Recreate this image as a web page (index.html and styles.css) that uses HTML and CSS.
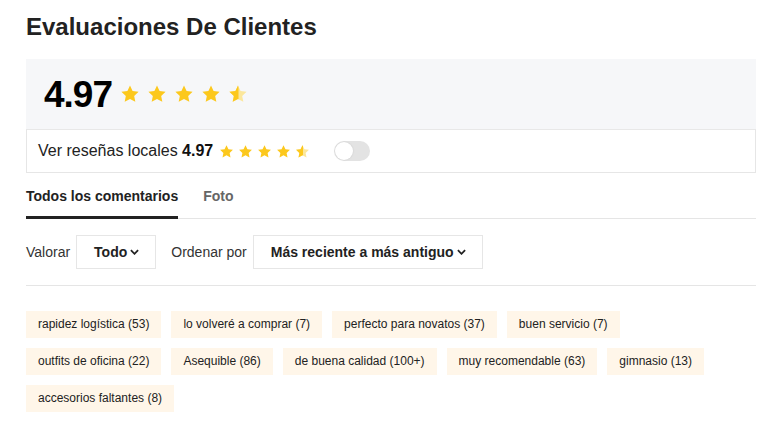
FILE: index.html
```html
<!DOCTYPE html>
<html lang="es">
<head>
<meta charset="utf-8">
<link rel="stylesheet" href="styles.css">
</head>
<body>
<svg width="0" height="0" class="defs">
  <defs>
    <symbol id="star" viewBox="0 0 24 24"><path d="M12 1.8l3.1 6.6 7.2.9-5.3 5 1.4 7.1L12 17.9l-6.4 3.5 1.4-7.1-5.3-5 7.2-.9z"/></symbol>
    <clipPath id="half"><rect x="0" y="0" width="12.6" height="24"/></clipPath>
  </defs>
</svg>
<main class="page">
  <h1 class="title">Evaluaciones De Clientes</h1>

  <section class="summary">
    <span class="score">4.97</span>
    <span class="stars big">
      <svg class="star"><use href="#star"/></svg>
      <svg class="star"><use href="#star"/></svg>
      <svg class="star"><use href="#star"/></svg>
      <svg class="star"><use href="#star"/></svg>
      <svg class="star" viewBox="0 0 24 24"><path class="pale" d="M12 1.8l3.1 6.6 7.2.9-5.3 5 1.4 7.1L12 17.9l-6.4 3.5 1.4-7.1-5.3-5 7.2-.9z"/><path clip-path="url(#half)" d="M12 1.8l3.1 6.6 7.2.9-5.3 5 1.4 7.1L12 17.9l-6.4 3.5 1.4-7.1-5.3-5 7.2-.9z"/></svg>
    </span>
  </section>

  <section class="local">
    <span class="local-text">Ver reseñas locales <b>4.97</b></span>
    <span class="stars small">
      <svg class="star"><use href="#star"/></svg>
      <svg class="star"><use href="#star"/></svg>
      <svg class="star"><use href="#star"/></svg>
      <svg class="star"><use href="#star"/></svg>
      <svg class="star" viewBox="0 0 24 24"><path class="pale" d="M12 1.8l3.1 6.6 7.2.9-5.3 5 1.4 7.1L12 17.9l-6.4 3.5 1.4-7.1-5.3-5 7.2-.9z"/><path clip-path="url(#half)" d="M12 1.8l3.1 6.6 7.2.9-5.3 5 1.4 7.1L12 17.9l-6.4 3.5 1.4-7.1-5.3-5 7.2-.9z"/></svg>
    </span>
    <span class="toggle"><span class="knob"></span></span>
  </section>

  <nav class="tabs">
    <span class="tab active">Todos los comentarios</span>
    <span class="tab">Foto</span>
  </nav>

  <div class="filters">
    <span class="label">Valorar</span>
    <span class="select">Todo<svg class="chev" viewBox="0 0 10 6"><path d="M1 1l4 4 4-4"/></svg></span>
    <span class="label sort">Ordenar por</span>
    <span class="select">Más reciente a más antiguo<svg class="chev" viewBox="0 0 10 6"><path d="M1 1l4 4 4-4"/></svg></span>
  </div>

  <ul class="tags">
    <li>rapidez logística (53)</li>
    <li>lo volveré a comprar (7)</li>
    <li>perfecto para novatos (37)</li>
    <li>buen servicio (7)</li>
    <li>outfits de oficina (22)</li>
    <li>Asequible (86)</li>
    <li>de buena calidad (100+)</li>
    <li>muy recomendable (63)</li>
    <li>gimnasio (13)</li>
    <li>accesorios faltantes (8)</li>
  </ul>
</main>
</body>
</html>
```

FILE: styles.css
```css
* { box-sizing: border-box; }
html, body { margin: 0; padding: 0; background: #fff; }
body { font-family: "Liberation Sans", Arial, sans-serif; color: #222; }
.defs { position: absolute; width: 0; height: 0; }

.page { padding: 13px 2px 0 26px; }

.title {
  margin: 0;
  font-size: 24px;
  line-height: 28px;
  font-weight: 700;
  color: #222;
}

.summary {
  margin-top: 18px;
  height: 70px;
  background: #f6f7f9;
  display: flex;
  align-items: center;
  padding-left: 18px;
}
.score {
  font-size: 37px;
  font-weight: 700;
  color: #000;
  letter-spacing: -1px;
  line-height: 1;
}
.stars { display: flex; fill: #fcc81d; }
.stars .pale { fill: #fbe79c; }
.stars.big { margin-left: 8px; gap: 7px; }
.stars.big .star { width: 20px; height: 20px; }
.stars.small { margin-left: 6px; gap: 4px; }
.stars.small .star { width: 15px; height: 15px; }

.local {
  height: 44px;
  border: 1px solid #e6e6e6;
  border-top: 1px solid #e8e8e8;
  display: flex;
  align-items: center;
  padding-left: 11px;
}
.local-text { font-size: 16px; color: #222; }
.local-text b { color: #111; }
.toggle {
  margin-left: 24px;
  width: 36px;
  height: 20px;
  border-radius: 10px;
  background: #e3e3e3;
  display: flex;
  align-items: center;
  padding-left: 1px;
}
.knob {
  width: 18px;
  height: 18px;
  border-radius: 50%;
  background: #fff;
  box-shadow: 0 0 2px rgba(0,0,0,0.12);
}

.tabs {
  display: flex;
  gap: 25px;
  border-bottom: 1px solid #e5e5e5;
  height: 46px;
  margin-top: 0;
}
.tab {
  font-size: 14px;
  font-weight: 700;
  color: #666;
  display: flex;
  align-items: center;
  padding-top: 1px;
}
.tab.active {
  color: #222;
  border-bottom: 3px solid #222;
  margin-bottom: -1px;
  padding-top: 3px;
}

.filters {
  display: flex;
  align-items: center;
  margin-top: 16px;
  padding-bottom: 16px;
  border-bottom: 1px solid #e5e5e5;
}
.label { font-size: 14px; color: #333; }
.sort { margin-left: 15px; }
.select {
  margin-left: 6px;
  height: 34px;
  border: 1px solid #e6e6e6;
  display: flex;
  align-items: center;
  padding: 0 16px 0 17px;
  font-size: 14px;
  font-weight: 700;
  color: #222;
}
.chev {
  width: 9px;
  height: 6px;
  margin-left: 3px;
  fill: none;
  stroke: #222;
  stroke-width: 2;
}

.tags {
  list-style: none;
  margin: 25px 0 0;
  padding: 0;
  display: flex;
  flex-wrap: wrap;
  gap: 10px;
  max-width: 700px;
}
.tags li {
  background: #fff6e9;
  height: 27px;
  padding: 0 12px;
  font-size: 12px;
  line-height: 27px;
  color: #222;
}
```
